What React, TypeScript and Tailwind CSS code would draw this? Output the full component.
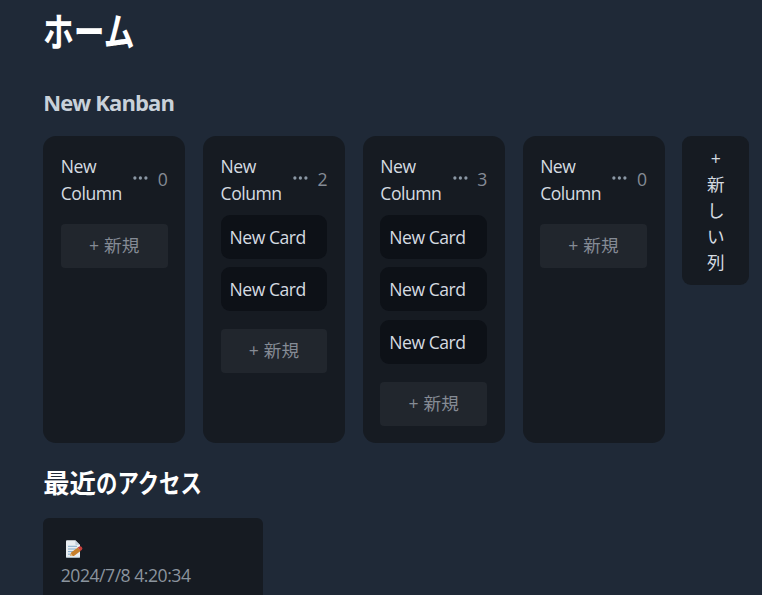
type Column = { title: string; cards: string[] };

const columns: Column[] = [
  { title: "New Column", cards: [] },
  { title: "New Column", cards: ["New Card", "New Card"] },
  { title: "New Column", cards: ["New Card", "New Card", "New Card"] },
  { title: "New Column", cards: [] },
];

function Dots() {
  return (
    <svg className="mb-[4px] block h-[4px] w-[15px] shrink-0" viewBox="0 0 15 4" fill="#8b98a5">
      <circle cx="1.9" cy="2" r="1.65" />
      <circle cx="7.4" cy="2" r="1.65" />
      <circle cx="12.9" cy="2" r="1.65" />
    </svg>
  );
}

function MemoIcon() {
  return (
    <svg className="block h-[18px] w-[18px]" viewBox="0 0 18 18">
      <path d="M1 1.2Q1 .3 2 .3H10.3L15 5V17Q15 17.8 14 17.8H2Q1 17.8 1 17Z" fill="#e9eef2" />
      <path d="M10.3.3 15 5H11.2Q10.3 5 10.3 4Z" fill="#c3d0dc" />
      <path d="M3 6.3H12M3 9H11M3 11.6H8M3 14.2H6" stroke="#83abc8" strokeWidth="1" />
      <path d="M1.2 17.4H14.8" stroke="#9fb0ba" strokeWidth=".8" />
      <path d="M5.2 16 6.1 12.4 12.8 7.4 15.6 11 8.9 16Z" fill="#c77f2b" />
      <path d="M5.2 16 5.9 13.4 7.9 16Z" fill="#e5bd86" />
      <path d="M12.7 7.6 14.3 6.6Q15.8 5.9 16.9 7.3 18 8.7 16.9 9.8L15.5 11Z" fill="#c8403c" />
    </svg>
  );
}

function BoardColumn({ title, cards }: Column) {
  return (
    <section className="flex w-[142.1px] shrink-0 flex-col rounded-[13px] bg-[#161b22] px-[17.6px] pt-[17.4px]">
      <header className="flex h-[52.6px] items-center">
        <h3 className="w-[72.2px] text-[#d5dbe1]">
          {title.split(" ").map((word) => (
            <span key={word} className="block leading-[27px]">
              {word}
            </span>
          ))}
        </h3>
        <Dots />
        <span className="ml-auto text-[#858b95] tracking-normal">{cards.length}</span>
      </header>
      <div className="flex flex-col gap-[8.7px] pt-[8.8px]">
        {cards.map((card, i) => (
          <div key={i} className="flex h-[44px] items-center rounded-[9px] bg-[#0d1117] px-[9px] text-[#d5dbe1]">
            {card}
          </div>
        ))}
      </div>
      <button
        className={`flex h-[44px] w-full shrink-0 items-center justify-center rounded-[4px] bg-[#21262d] pb-[1px] tracking-[0.15px] text-[#858b95] ${
          cards.length ? "mt-[17.4px]" : "mt-[8.8px]"
        }`}
      >
        + 新規
      </button>
    </section>
  );
}

export default function App() {
  return (
    <main className="h-[595px] w-full overflow-hidden bg-[#1f2937] pl-[43.2px] font-['Open_Sans','Noto_Sans_CJK_JP',sans-serif] text-[17.6px] leading-[26.4px] tracking-[-0.5px]">
      <h1 className="h-[60px] w-max origin-left scale-x-[0.79] pt-px text-[39px] leading-[60px] font-bold tracking-normal text-white">
        ホーム
      </h1>
      <h2 className="mt-[26px] h-[32px] text-[22px] leading-[32px] font-bold tracking-[-0.85px] text-[#c9d1d9]">New Kanban</h2>
      <div className="mt-[18px] flex h-[307px] items-stretch gap-[17.7px]">
        {columns.map((column, i) => (
          <BoardColumn key={i} {...column} />
        ))}
        <button className="flex h-[149px] w-[66.8px] shrink-0 flex-col items-center rounded-[9px] bg-[#161b22] pt-[8.5px] tracking-normal text-[#d5dbe1]">
          {["+", "新", "し", "い", "列"].map((char) => (
            <span key={char} className="leading-[26.2px]">
              {char}
            </span>
          ))}
        </button>
      </div>
      <h2 className="mt-[21px] flex h-[38px] text-[26.4px] leading-[38px] font-bold tracking-normal text-white">
        <span>最近</span>
        <span className="origin-left scale-x-[0.81]">のアクセス</span>
      </h2>
      <article className="mt-[16px] h-[100px] w-[220px] rounded-[6px] bg-[#161b22] px-[17.6px] pt-[22px]">
        <div className="ml-[3.8px]">
          <MemoIcon />
        </div>
        <time className="mt-[4px] block tracking-[-0.48px] text-[#8b949e]">2024/7/8 4:20:34</time>
      </article>
    </main>
  );
}
